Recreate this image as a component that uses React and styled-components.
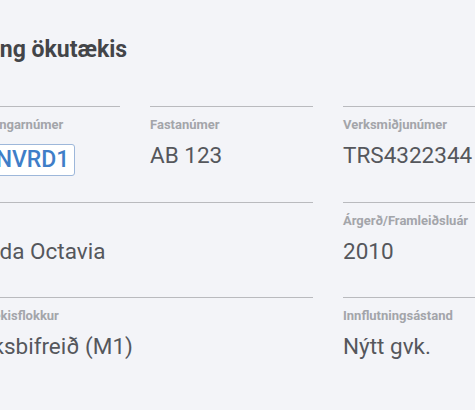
import React from 'react';
import styled, { createGlobalStyle } from 'styled-components';

const GlobalStyle = createGlobalStyle`
  html, body {
    margin: 0;
    padding: 0;
    background: #f3f4f8;
    overflow: hidden;
  }
  body {
    font-family: Roboto, "Liberation Sans", Arial, sans-serif;
  }
`;

const fields = [
  { label: 'Skráningarnúmer', value: 'PENVRD1', plate: true },
  { label: 'Fastanúmer', value: 'AB 123' },
  { label: 'Verksmiðjunúmer', value: 'TRS4322344' },
  { label: 'Gerð', value: 'Skoda Octavia', span: 2 },
  { label: 'Árgerð/Framleiðsluár', value: '2010' },
  { label: 'Ökutækisflokkur', value: 'Fólksbifreið (M1)', span: 2 },
  { label: 'Innflutningsástand', value: 'Nýtt gvk.' },
];

const Page = styled.div`
  width: 544px;
  margin-left: -38px;
  padding-top: 36px;
`;

const Title = styled.h2`
  margin: 0 0 42px -28px;
  font-size: 23px;
  line-height: 28px;
  font-weight: 700;
  color: #434549;
  white-space: nowrap;
`;

const Grid = styled.div`
  display: grid;
  grid-template-columns: 158px 163px 163px;
  column-gap: 30px;
`;

const Field = styled.div`
  grid-column: span ${(p) => p.$span || 1};
  box-sizing: border-box;
  min-height: 95.5px;
  border-top: 1px solid #b9babe;
  padding-top: 10px;
  display: flex;
  flex-direction: column;
  align-items: flex-start;
  gap: 6px;
`;

const Label = styled.span`
  font-size: 13px;
  line-height: 16px;
  font-weight: 700;
  color: #a3a5aa;
  white-space: nowrap;
`;

const Value = styled.span`
  font-size: 22.5px;
  line-height: 32px;
  color: #55575c;
  white-space: nowrap;
`;

const Plate = styled.span`
  box-sizing: border-box;
  margin-top: 5px;
  height: 32px;
  line-height: 30px;
  padding: 0 5px;
  border: 1px solid #9db7da;
  border-radius: 3px;
  background: #ffffff;
  font-size: 23px;
  font-weight: 500;
  color: #3f7ec8;
  white-space: nowrap;
`;

export default function App() {
  return (
    <>
      <GlobalStyle />
      <Page>
        <Title>Skráning ökutækis</Title>
        <Grid>
          {fields.map((f) => (
            <Field key={f.label} $span={f.span}>
              <Label>{f.label}</Label>
              {f.plate ? <Plate>{f.value}</Plate> : <Value>{f.value}</Value>}
            </Field>
          ))}
        </Grid>
      </Page>
    </>
  );
}
